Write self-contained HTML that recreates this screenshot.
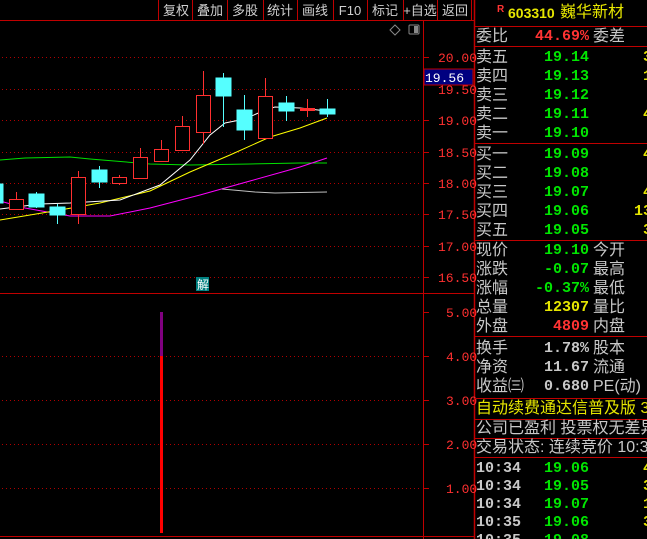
<!DOCTYPE html><html><head><meta charset="utf-8"><style>
html,body{margin:0;background:#000;width:647px;height:539px;overflow:hidden}
body{position:relative;font-family:"Liberation Sans","WenQuanYi Zen Hei","Noto Sans CJK SC",sans-serif}
.t{position:absolute;white-space:nowrap;line-height:19px}
.l{color:#c8c8c8;font-size:16px}
.n{font-family:"Liberation Mono","DejaVu Sans Mono",monospace;font-weight:bold;font-size:15px;text-align:right;width:110px}
.g{color:#00e600}.y{color:#e6e600}.r{color:#ff3333}.w{color:#c8c8c8}
</style></head><body>
<svg width="647" height="539" style="position:absolute;left:0;top:0" font-family="Liberation Sans,WenQuanYi Zen Hei,sans-serif">
<line x1="0" y1="20.5" x2="474" y2="20.5" stroke="#c00000"/>
<g stroke="#c00000"><line x1="158.5" y1="0" x2="158.5" y2="20"/><line x1="192.5" y1="0" x2="192.5" y2="20"/><line x1="227.5" y1="0" x2="227.5" y2="20"/><line x1="263.5" y1="0" x2="263.5" y2="20"/><line x1="297.5" y1="0" x2="297.5" y2="20"/><line x1="333.5" y1="0" x2="333.5" y2="20"/><line x1="367.5" y1="0" x2="367.5" y2="20"/><line x1="403.5" y1="0" x2="403.5" y2="20"/><line x1="437.5" y1="0" x2="437.5" y2="20"/><line x1="471.5" y1="0" x2="471.5" y2="20"/></g>
<g fill="#d0d0d0" font-size="13" text-anchor="middle"><text x="176" y="15">复权</text><text x="210" y="15">叠加</text><text x="245" y="15">多股</text><text x="280" y="15">统计</text><text x="315" y="15">画线</text><text x="350" y="15">F10</text><text x="385" y="15">标记</text><text x="420" y="15">+自选</text><text x="455" y="15">返回</text></g>
<line x1="423.5" y1="20" x2="423.5" y2="539" stroke="#c00000"/>
<line x1="474.5" y1="0" x2="474.5" y2="539" stroke="#c00000" stroke-width="1.5"/>
<line x1="0" y1="293.5" x2="474" y2="293.5" stroke="#c00000"/>
<line x1="0" y1="536.5" x2="474" y2="536.5" stroke="#c00000"/>
<g stroke="#b00000" stroke-dasharray="1,3"><line x1="2" y1="57.5" x2="420" y2="57.5"/><line x1="2" y1="89.5" x2="420" y2="89.5"/><line x1="2" y1="120.5" x2="420" y2="120.5"/><line x1="2" y1="152.5" x2="420" y2="152.5"/><line x1="2" y1="183.5" x2="420" y2="183.5"/><line x1="2" y1="214.5" x2="420" y2="214.5"/><line x1="2" y1="246.5" x2="420" y2="246.5"/><line x1="2" y1="277.5" x2="420" y2="277.5"/>
<line x1="2" y1="356.5" x2="420" y2="356.5"/><line x1="2" y1="400.5" x2="420" y2="400.5"/><line x1="2" y1="444.5" x2="420" y2="444.5"/><line x1="2" y1="488.5" x2="420" y2="488.5"/></g>
<g stroke="#c00000"><line x1="424" y1="57.5" x2="429" y2="57.5"/><line x1="424" y1="120.5" x2="429" y2="120.5"/><line x1="424" y1="152.5" x2="429" y2="152.5"/><line x1="424" y1="183.5" x2="429" y2="183.5"/><line x1="424" y1="214.5" x2="429" y2="214.5"/><line x1="424" y1="246.5" x2="429" y2="246.5"/><line x1="424" y1="277.5" x2="429" y2="277.5"/><line x1="424" y1="312.5" x2="429" y2="312.5"/><line x1="424" y1="356.5" x2="429" y2="356.5"/><line x1="424" y1="400.5" x2="429" y2="400.5"/><line x1="424" y1="444.5" x2="429" y2="444.5"/><line x1="424" y1="488.5" x2="429" y2="488.5"/></g>
<g fill="#ff3030" font-size="13" font-family="Liberation Mono,monospace"><text x="438" y="62">20.00</text><text x="438" y="94">19.50</text><text x="438" y="125">19.00</text><text x="438" y="157">18.50</text><text x="438" y="188">18.00</text><text x="438" y="219">17.50</text><text x="438" y="251">17.00</text><text x="438" y="282">16.50</text>
<text x="446" y="317">5.00</text><text x="446" y="361">4.00</text><text x="446" y="405">3.00</text><text x="446" y="449">2.00</text><text x="446" y="493">1.00</text></g>
<rect x="424" y="69" width="49" height="16" fill="#000080" stroke="#c00000"/>
<text x="425" y="82" fill="#fff" font-size="13" font-family="Liberation Mono,monospace">19.56</text>
<path d="M395 25 L400 30 L395 35 L390 30Z" fill="none" stroke="#888"/>
<rect x="409" y="25" width="10" height="9" fill="none" stroke="#888" rx="1"/><rect x="414" y="26" width="4" height="7" fill="#888"/>
<polyline fill="none" stroke="#00e000" points="0,160 25,158 70,157 90,159 150,164 190,165 250,164 300,163 327,163"/>
<polyline fill="none" stroke="#ff00ff" points="0,201 25,208 70,216 110,216 150,208 200,195 225,188 250,181 300,167 327,158"/>
<polyline fill="none" stroke="#c0c0c0" points="222,189 255,192 275,193 327,192"/>
<polyline fill="none" stroke="#ffff00" points="0,220 60,210 100,203 150,191 190,172 230,155 270,137 300,128 327,118"/>
<polyline fill="none" stroke="#ffffff" points="0,209 40,204 70,203 120,200 160,185 190,160 210,135 225,123 245,119 265,110 275,107 300,108 327,111"/>
<g stroke="#ff3030" fill="#000">
<line x1="16.5" y1="192" x2="16.5" y2="210"/><rect x="9.5" y="199.5" width="14" height="10"/>
<line x1="78.5" y1="171" x2="78.5" y2="224"/><rect x="71.5" y="177.5" width="14" height="37"/>
<line x1="119.5" y1="175" x2="119.5" y2="185"/><rect x="112.5" y="177.5" width="14" height="6"/>
<line x1="140.5" y1="148" x2="140.5" y2="178"/><rect x="133.5" y="157.5" width="14" height="21"/>
<line x1="161.5" y1="140" x2="161.5" y2="161"/><rect x="154.5" y="149.5" width="14" height="12"/>
<line x1="182.5" y1="116" x2="182.5" y2="150"/><rect x="175.5" y="126.5" width="14" height="24"/>
<line x1="203.5" y1="71" x2="203.5" y2="144"/><rect x="196.5" y="95.5" width="14" height="37"/>
<line x1="265.5" y1="78" x2="265.5" y2="138"/><rect x="258.5" y="96.5" width="14" height="42"/>
<line x1="307.5" y1="99" x2="307.5" y2="117"/><rect x="300.5" y="108.5" width="14" height="2" fill="#ff3030"/>
</g>
<g fill="#55ffff" stroke="#55ffff">
<rect x="0" y="184" width="3" height="19"/>
<line x1="36.5" y1="192" x2="36.5" y2="208"/><rect x="29" y="194" width="15" height="13"/>
<line x1="57.5" y1="204" x2="57.5" y2="224"/><rect x="50" y="207" width="15" height="8"/>
<line x1="99.5" y1="166" x2="99.5" y2="188"/><rect x="92" y="170" width="15" height="12"/>
<line x1="223.5" y1="73" x2="223.5" y2="127"/><rect x="216" y="78" width="15" height="18"/>
<line x1="244.5" y1="95" x2="244.5" y2="140"/><rect x="237" y="110" width="15" height="20"/>
<line x1="286.5" y1="96" x2="286.5" y2="121"/><rect x="279" y="103" width="15" height="8"/>
<line x1="327.5" y1="99" x2="327.5" y2="117"/><rect x="320" y="109" width="15" height="5"/>
</g>
<rect x="196" y="277" width="13" height="14" fill="#008080"/>
<text x="197" y="289" fill="#fff" font-size="12">解</text>
<rect x="160" y="312" width="3" height="44" fill="#800080"/>
<rect x="160" y="356" width="3" height="177" fill="#ff0000"/>
<g stroke="#c00000"><line x1="475" y1="26.5" x2="647" y2="26.5"/><line x1="475" y1="46.5" x2="647" y2="46.5"/><line x1="475" y1="143.5" x2="647" y2="143.5"/><line x1="475" y1="240.5" x2="647" y2="240.5"/><line x1="475" y1="336.5" x2="647" y2="336.5"/><line x1="475" y1="398.5" x2="647" y2="398.5"/><line x1="475" y1="419.5" x2="647" y2="419.5"/><line x1="475" y1="438.5" x2="647" y2="438.5"/><line x1="475" y1="457.5" x2="647" y2="457.5"/></g>
</svg>
<div class="t r" style="left:497px;top:0;font-size:10px;font-weight:bold">R</div>
<div class="t y" style="left:508px;top:4px;font-size:14px;font-weight:bold">603310</div>
<div class="t y" style="left:560px;top:3px;font-size:16px">巍华新材</div>
<div class="t l" style="left:476px;top:27px">委比</div><div class="t n r" style="left:479px;top:27px">44.69%</div><div class="t l" style="left:593px;top:27px">委差</div>

<div class="t l" style="left:476px;top:48px">卖五</div><div class="t n g" style="left:479px;top:48px">19.14</div><div class="t n y" style="left:542px;top:48px">3</div>
<div class="t l" style="left:476px;top:67px">卖四</div><div class="t n g" style="left:479px;top:67px">19.13</div><div class="t n y" style="left:542px;top:67px">1</div>
<div class="t l" style="left:476px;top:86px">卖三</div><div class="t n g" style="left:479px;top:86px">19.12</div>
<div class="t l" style="left:476px;top:105px">卖二</div><div class="t n g" style="left:479px;top:105px">19.11</div><div class="t n y" style="left:542px;top:105px">4</div>
<div class="t l" style="left:476px;top:124px">卖一</div><div class="t n g" style="left:479px;top:124px">19.10</div>

<div class="t l" style="left:476px;top:145px">买一</div><div class="t n g" style="left:479px;top:145px">19.09</div><div class="t n y" style="left:542px;top:145px">4</div>
<div class="t l" style="left:476px;top:164px">买二</div><div class="t n g" style="left:479px;top:164px">19.08</div>
<div class="t l" style="left:476px;top:183px">买三</div><div class="t n g" style="left:479px;top:183px">19.07</div><div class="t n y" style="left:542px;top:183px">4</div>
<div class="t l" style="left:476px;top:202px">买四</div><div class="t n g" style="left:479px;top:202px">19.06</div><div class="t n y" style="left:542px;top:202px">13</div>
<div class="t l" style="left:476px;top:221px">买五</div><div class="t n g" style="left:479px;top:221px">19.05</div><div class="t n y" style="left:542px;top:221px">3</div>

<div class="t l" style="left:476px;top:241px">现价</div><div class="t n g" style="left:479px;top:241px">19.10</div><div class="t l" style="left:593px;top:241px">今开</div>
<div class="t l" style="left:476px;top:260px">涨跌</div><div class="t n g" style="left:479px;top:260px">-0.07</div><div class="t l" style="left:593px;top:260px">最高</div>
<div class="t l" style="left:476px;top:279px">涨幅</div><div class="t n g" style="left:479px;top:279px">-0.37%</div><div class="t l" style="left:593px;top:279px">最低</div>
<div class="t l" style="left:476px;top:298px">总量</div><div class="t n y" style="left:479px;top:298px">12307</div><div class="t l" style="left:593px;top:298px">量比</div>
<div class="t l" style="left:476px;top:317px">外盘</div><div class="t n r" style="left:479px;top:317px">4809</div><div class="t l" style="left:593px;top:317px">内盘</div>

<div class="t l" style="left:476px;top:339px">换手</div><div class="t n w" style="left:479px;top:339px">1.78%</div><div class="t l" style="left:593px;top:339px">股本</div>
<div class="t l" style="left:476px;top:358px">净资</div><div class="t n w" style="left:479px;top:358px">11.67</div><div class="t l" style="left:593px;top:358px">流通</div>
<div class="t l" style="left:476px;top:377px">收益㈢</div><div class="t n w" style="left:479px;top:377px">0.680</div><div class="t l" style="left:593px;top:377px">PE(动)</div>

<div class="t y" style="left:476px;top:399px;font-size:16px">自动续费通达信普及版 3</div>
<div class="t l" style="left:476px;top:419px">公司已盈利 投票权无差异</div>
<div class="t l" style="left:476px;top:438px">交易状态: 连续竞价 10:30</div>

<div class="t n w" style="left:476px;top:459px;width:auto;text-align:left">10:34</div><div class="t n g" style="left:479px;top:459px">19.06</div><div class="t n y" style="left:542px;top:459px">4</div>
<div class="t n w" style="left:476px;top:477px;width:auto;text-align:left">10:34</div><div class="t n g" style="left:479px;top:477px">19.05</div><div class="t n y" style="left:542px;top:477px">3</div>
<div class="t n w" style="left:476px;top:495px;width:auto;text-align:left">10:34</div><div class="t n g" style="left:479px;top:495px">19.07</div><div class="t n y" style="left:542px;top:495px">1</div>
<div class="t n w" style="left:476px;top:513px;width:auto;text-align:left">10:35</div><div class="t n g" style="left:479px;top:513px">19.06</div><div class="t n y" style="left:542px;top:513px">3</div>
<div class="t n w" style="left:476px;top:531px;width:auto;text-align:left">10:35</div><div class="t n g" style="left:479px;top:531px">19.08</div>
</body></html>
